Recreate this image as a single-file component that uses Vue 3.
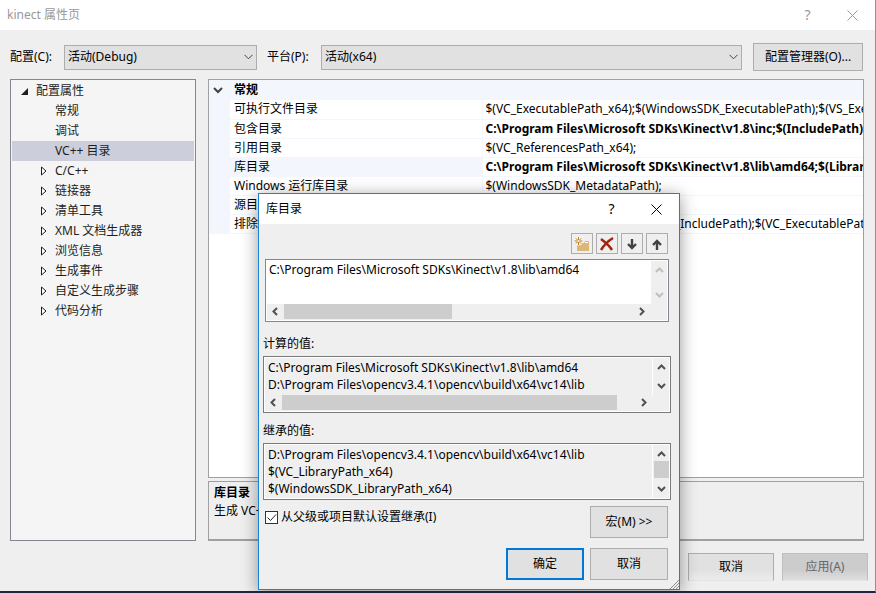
<script setup>
import { ref } from 'vue'

let config = ref('debug')
let platform = ref('x64')
let inherit = ref(true)
let selected = ref('VC++ 目录')
let dirs = ref('C:\\Program Files\\Microsoft SDKs\\Kinect\\v1.8\\lib\\amd64')

let computedDirs = [
  'C:\\Program Files\\Microsoft SDKs\\Kinect\\v1.8\\lib\\amd64',
  'D:\\Program Files\\opencv3.4.1\\opencv\\build\\x64\\vc14\\lib',
].join('\n')

let inheritedDirs = [
  'D:\\Program Files\\opencv3.4.1\\opencv\\build\\x64\\vc14\\lib',
  '$(VC_LibraryPath_x64)',
  '$(WindowsSDK_LibraryPath_x64)',
].join('\n')

let tree = [
  { name: '常规' },
  { name: '调试' },
  { name: 'VC++ 目录' },
  { name: 'C/C++', children: true },
  { name: '链接器', children: true },
  { name: '清单工具', children: true },
  { name: 'XML 文档生成器', children: true },
  { name: '浏览信息', children: true },
  { name: '生成事件', children: true },
  { name: '自定义生成步骤', children: true },
  { name: '代码分析', children: true },
]

let rows = [
  { name: '可执行文件目录', value: '$(VC_ExecutablePath_x64);$(WindowsSDK_ExecutablePath);$(VS_ExecutablePath)' },
  { name: '包含目录', value: 'C:\\Program Files\\Microsoft SDKs\\Kinect\\v1.8\\inc;$(IncludePath)', bold: true },
  { name: '引用目录', value: '$(VC_ReferencesPath_x64);' },
  { name: '库目录', value: 'C:\\Program Files\\Microsoft SDKs\\Kinect\\v1.8\\lib\\amd64;$(LibraryPath)', bold: true, active: true },
  { name: 'Windows 运行库目录', value: '$(WindowsSDK_MetadataPath);' },
  { name: '源目录', value: '$(VC_SourcePath);' },
  { name: '排除目录', value: '$(VC_IncludePath);$(WindowsSDK_IncludePath);$(VC_ExecutablePath_x64)' },
]
</script>

<template>
  <div class="window">
    <header class="titlebar">
      <span class="title">kinect 属性页</span>
      <button class="caption" aria-label="帮助">?</button>
      <button class="caption" aria-label="关闭">
        <svg width="11" height="11" viewBox="0 0 11 11"><path d="M.5 .5l10 10M10.5 .5l-10 10" /></svg>
      </button>
    </header>

    <div class="toolbar">
      <label for="config">配置(C):</label>
      <div class="select config">
        <select id="config" v-model="config">
          <option value="debug">活动(Debug)</option>
        </select>
        <svg width="9" height="6" viewBox="0 0 9 6"><path d="M.5 .8l4 4 4-4" /></svg>
      </div>
      <label for="platform">平台(P):</label>
      <div class="select platform">
        <select id="platform" v-model="platform">
          <option value="x64">活动(x64)</option>
        </select>
        <svg width="9" height="6" viewBox="0 0 9 6"><path d="M.5 .8l4 4 4-4" /></svg>
      </div>
      <button class="btn manager">配置管理器(O)...</button>
    </div>

    <main class="content">
      <nav class="tree">
        <div class="root">
          <svg width="7" height="7" viewBox="0 0 7 7"><path d="M7 0v7H0z" fill="#1e1e1e" /></svg>
          <span>配置属性</span>
        </div>
        <ul>
          <li
            v-for="item in tree"
            :key="item.name"
            :class="{ selected: item.name === selected }"
            @click="selected = item.name"
          >
            <svg class="arrow" width="6" height="10" viewBox="0 0 6 10">
              <path v-if="item.children" d="M.5 1v8l4.500-4z" />
            </svg>
            <span>{{ item.name }}</span>
          </li>
        </ul>
      </nav>

      <section class="details">
        <div class="grid">
          <table>
            <colgroup>
              <col class="col-margin" />
              <col class="col-name" />
              <col />
            </colgroup>
            <thead>
              <tr>
                <th class="margin">
                  <svg width="10" height="7" viewBox="0 0 10 7"><path d="M1 1l4 4 4-4" /></svg>
                </th>
                <th colspan="2">常规</th>
              </tr>
            </thead>
            <tbody>
              <tr v-for="row in rows" :key="row.name" :class="{ active: row.active }">
                <td class="margin"></td>
                <td class="name">{{ row.name }}</td>
                <td class="value" :class="{ bold: row.bold }">{{ row.value }}</td>
              </tr>
            </tbody>
          </table>
        </div>
        <div class="description">
          <strong>库目录</strong>
          <p>生成 VC++ 项目时要搜索的库文件目录</p>
        </div>
      </section>
    </main>

    <footer class="footer">
      <button class="btn">取消</button>
      <button class="btn apply">应用(A)</button>
    </footer>

    <div class="dialog" role="dialog" aria-labelledby="dialog-title">
      <header class="titlebar">
        <span id="dialog-title" class="title">库目录</span>
        <button class="caption" aria-label="帮助">?</button>
        <button class="caption" aria-label="关闭">
          <svg width="11" height="11" viewBox="0 0 11 11"><path d="M.5 .5l10 10M10.5 .5l-10 10" /></svg>
        </button>
      </header>

      <div class="tools">
        <button aria-label="新行">
          <svg width="16" height="16" viewBox="0 0 16 16">
            <path d="M3 15V7h7l1-2h4v10z" fill="#dcb67a" />
            <path d="M11 6.500h3" stroke="#fff" />
            <circle cx="4.500" cy="5" r="4.500" fill="#f6f6f6" />
            <path d="M4.500 1v8M.5 5h8M1.800 2.300l5.400 5.400M7.200 2.300L1.800 7.700" stroke="#c27d1a" />
            <circle cx="4.500" cy="5" r="1" fill="#fff" />
          </svg>
        </button>
        <button aria-label="删除">
          <svg width="16" height="16" viewBox="0 0 16 16">
            <path d="M2 3c4 3 8 6 11 11M14 2C9 5 5 9 2 14" stroke="#a1260d" stroke-width="2.500" fill="none" />
          </svg>
        </button>
        <button aria-label="下移">
          <svg width="16" height="16" viewBox="0 0 16 16">
            <path d="M8 3v9M4 8l4 4 4-4" stroke="#424242" stroke-width="2.400" fill="none" />
          </svg>
        </button>
        <button aria-label="上移">
          <svg width="16" height="16" viewBox="0 0 16 16">
            <path d="M8 14V5M4 9l4-4 4 4" stroke="#424242" stroke-width="2.400" fill="none" />
          </svg>
        </button>
      </div>

      <div class="listbox editor">
        <textarea v-model="dirs" wrap="off" aria-label="库目录"></textarea>
        <div class="vbar disabled">
          <svg width="9" height="6" viewBox="0 0 9 6"><path d="M1 5l3.500-3.500L8 5" /></svg>
          <svg width="9" height="6" viewBox="0 0 9 6"><path d="M1 1l3.500 3.500L8 1" /></svg>
        </div>
        <div class="hbar">
          <svg width="6" height="9" viewBox="0 0 6 9"><path d="M5 1L1.500 4.500 5 8" /></svg>
          <div class="track"><div class="thumb half"></div></div>
          <svg width="6" height="9" viewBox="0 0 6 9"><path d="M1 1l3.500 3.500L1 8" /></svg>
        </div>
      </div>

      <label class="caption-label first" for="computed">计算的值:</label>
      <div class="listbox">
        <textarea id="computed" :value="computedDirs" wrap="off" readonly></textarea>
        <div class="vbar">
          <svg width="9" height="6" viewBox="0 0 9 6"><path d="M1 5l3.500-3.500L8 5" /></svg>
          <svg width="9" height="6" viewBox="0 0 9 6"><path d="M1 1l3.500 3.500L8 1" /></svg>
        </div>
        <div class="hbar">
          <svg width="6" height="9" viewBox="0 0 6 9"><path d="M5 1L1.500 4.500 5 8" /></svg>
          <div class="track"><div class="thumb"></div></div>
          <svg width="6" height="9" viewBox="0 0 6 9"><path d="M1 1l3.500 3.500L1 8" /></svg>
        </div>
      </div>

      <label class="caption-label" for="inherited">继承的值:</label>
      <div class="listbox">
        <textarea id="inherited" class="tall" :value="inheritedDirs" wrap="off" readonly></textarea>
        <div class="vbar">
          <svg width="9" height="6" viewBox="0 0 9 6"><path d="M1 5l3.500-3.500L8 5" /></svg>
          <div class="vthumb"></div>
          <svg width="9" height="6" viewBox="0 0 9 6"><path d="M1 1l3.500 3.500L8 1" /></svg>
        </div>
      </div>

      <div class="options">
        <label class="check">
          <span class="box">
            <input v-model="inherit" type="checkbox" />
            <svg v-if="inherit" width="11" height="11" viewBox="0 0 11 11"><path d="M1.500 5.500l3 3L10 2.500" /></svg>
          </span>
          从父级或项目默认设置继承(I)
        </label>
        <button class="btn">宏(M) &gt;&gt;</button>
      </div>

      <div class="actions">
        <button class="btn primary">确定</button>
        <button class="btn">取消</button>
      </div>

      <svg class="grip" width="10" height="10" viewBox="0 0 10 10">
        <path d="M1 10l9-9M4 10l6-6M7 10l3-3" stroke="#8c8c8c" />
      </svg>
    </div>
  </div>
</template>

<style>
body {
  margin: 0;
}
</style>

<style scoped>
.window {
  position: relative;
  box-sizing: border-box;
  display: flex;
  flex-direction: column;
  min-height: 100vh;
  background: #efefef;
  border-right: 1px solid #8e929c;
  border-bottom: 2px solid #1d2542;
  color: #000;
  font: 12px/16px 'Noto Sans', 'Noto Sans CJK SC', sans-serif;
  overflow: hidden;
}

* {
  box-sizing: border-box;
}

button,
select,
textarea {
  font: inherit;
  color: inherit;
}

.titlebar {
  display: flex;
  align-items: center;
  height: 30px;
  padding-left: 7px;
  background: #fff;
}

.window > .titlebar {
  color: #999;
}

.title {
  flex: 1;
}

.caption {
  display: flex;
  align-items: center;
  justify-content: center;
  width: 45px;
  height: 30px;
  padding: 0;
  border: none;
  background: none;
  font-size: 14px;
}

.caption path {
  stroke: currentColor;
}

.toolbar {
  display: flex;
  align-items: center;
  height: 28px;
  margin: 13px 12px 8px 10px;
}

.toolbar label {
  width: 54px;
}

.select {
  display: grid;
  align-items: center;
}

.select select,
.select svg {
  grid-area: 1 / 1;
}

.select svg {
  justify-self: end;
  margin-right: 4px;
  pointer-events: none;
}

.select path {
  fill: none;
  stroke: #444;
}

.config {
  flex: 0 0 193px;
  margin-right: 10px;
}

.platform {
  flex: 1;
  margin-right: 11px;
}

select {
  appearance: none;
  width: 100%;
  height: 25px;
  padding: 0 3px;
  border: 1px solid #adadad;
  border-radius: 0;
  background: #e1e1e1;
}

.btn {
  width: 78px;
  height: 32px;
  padding: 0;
  border: 1px solid #adadad;
  background: #e1e1e1;
  white-space: nowrap;
}

.btn.manager {
  width: 110px;
  height: 28px;
}

.content {
  flex: 1;
  display: flex;
  gap: 12px;
  margin: 0 11px 0 10px;
}

.tree {
  flex: 0 0 186px;
  padding: 1px;
  border: 1px solid #828790;
  background: #f5f5f5;
  color: #1e1e1e;
}

.root {
  display: flex;
  align-items: center;
  gap: 8px;
  height: 20px;
  padding-left: 9px;
}

.tree ul {
  margin: 0;
  padding: 0;
  list-style: none;
}

.tree li {
  display: flex;
  align-items: center;
  gap: 8px;
  height: 20px;
  padding-left: 29px;
}

.tree li.selected {
  background: #cccedb;
}

.arrow path {
  fill: #fff;
  stroke: #1e1e1e;
}

.details {
  flex: 1;
  min-width: 0;
  display: flex;
  flex-direction: column;
  gap: 3px;
}

.grid {
  flex: 1;
  border: 1px solid #a0a0a0;
  background: #fff;
  overflow: hidden;
}

table {
  width: 100%;
  table-layout: fixed;
  border-collapse: collapse;
}

.col-margin {
  width: 21px;
}

.col-name {
  width: 252px;
}

th,
td {
  height: 19px;
  padding: 0 4px;
  line-height: 18px;
  text-align: left;
  white-space: nowrap;
  overflow: hidden;
}

th {
  height: 20px;
  line-height: 20px;
  background: #f3f6fc;
}

td {
  border-bottom: 1px solid #f3f6fc;
}

th.margin,
td.margin {
  padding: 0 3px 0 4px;
  background: #f3f6fc;
}

.margin svg {
  display: block;
}

.margin path {
  fill: none;
  stroke: #444;
  stroke-width: 2;
}

.name {
  border-right: 1px solid #f3f6fc;
}

.value {
  padding: 0 0 0 3px;
}

.active .name {
  background: #f3f6fc;
}

.bold {
  font-weight: 700;
}

.description {
  height: 60px;
  padding: 2px 5px;
  border: 1px solid #a0a0a0;
  border-bottom-width: 2px;
  line-height: 18px;
}

.description p {
  margin: 0;
}

.footer {
  display: flex;
  justify-content: flex-end;
  gap: 8px;
  padding: 12px 7px 10px;
}

.footer .btn {
  width: 86px;
  height: 28px;
  border-bottom-color: #e4e4e4;
  background: linear-gradient(#e1e1e1 60%, #ececec);
}

.footer .apply {
  border-color: #bfbfbf #bfbfbf #e4e4e4;
  background: linear-gradient(#ccc 60%, #dedede);
  color: #666;
}

.dialog {
  position: absolute;
  top: 193px;
  left: 258px;
  width: 422px;
  padding-bottom: 9px;
  border: 1px solid #1883d7;
  background: #efefef;
  box-shadow: 0 3px 16px rgba(0, 0, 0, 0.4);
}

.tools {
  display: flex;
  justify-content: flex-end;
  gap: 3px;
  margin: 9px 11px 5px;
}

.tools button {
  display: flex;
  align-items: center;
  justify-content: center;
  width: 22px;
  height: 21px;
  padding: 0;
  border: 1px solid #adadad;
  background: #efefef;
}

.listbox {
  display: grid;
  grid-template-columns: 1fr 16px;
  column-gap: 1px;
  margin: 0 8px 0 4px;
  padding: 1px;
  border: 1px solid #7a7a7a;
  background: #fff;
}

.listbox.editor {
  margin: 0 10px 0 6px;
  border-color: #828790;
}

textarea {
  display: block;
  width: 100%;
  height: 37px;
  padding: 1px 3px;
  border: none;
  border-radius: 0;
  outline: none;
  background: #efefef;
  line-height: 17px;
  resize: none;
  overflow: hidden;
}

textarea.tall {
  height: 53px;
}

.editor textarea {
  height: 43px;
  padding: 0 2px;
  background: #fff;
}

.vbar {
  display: flex;
  flex-direction: column;
  align-items: center;
  justify-content: space-between;
  padding: 6px 0;
  background: #efefef;
}

.vbar path,
.hbar path {
  fill: none;
  stroke: #505050;
  stroke-width: 2;
}

.vbar.disabled path {
  stroke: #bfbfbf;
}

.vthumb {
  width: 15px;
  height: 17px;
  margin-bottom: 4px;
  background: #cdcdcd;
}

.hbar {
  grid-column: 1 / 3;
  display: flex;
  align-items: center;
  gap: 6px;
  height: 16px;
  padding: 0 22px 1px 5px;
  background: #efefef;
}

.track {
  flex: 1;
  height: 15px;
}

.thumb {
  width: 95%;
  height: 100%;
  background: #cdcdcd;
}

.thumb.half {
  width: 48%;
}

.caption-label {
  display: block;
  margin: 10px 0 4px 4px;
}

.caption-label.first {
  margin-top: 14px;
}

.options {
  display: flex;
  align-items: flex-start;
  justify-content: space-between;
  margin: 6px 11px 10px 6px;
}

.check {
  display: flex;
  align-items: center;
  gap: 3px;
  padding-top: 3px;
}

.box {
  display: grid;
  place-items: center;
}

.box input,
.box svg {
  grid-area: 1 / 1;
}

.box input {
  appearance: none;
  width: 13px;
  height: 13px;
  margin: 0;
  border: 1px solid #333;
  background: #fff;
}

.box svg {
  pointer-events: none;
}

.box path {
  fill: none;
  stroke: #222;
}

.actions {
  display: flex;
  justify-content: flex-end;
  gap: 6px;
  margin-right: 11px;
}

.btn.primary {
  border: 2px solid #0078d7;
}

.grip {
  position: absolute;
  right: 0;
  bottom: 0;
}
</style>
